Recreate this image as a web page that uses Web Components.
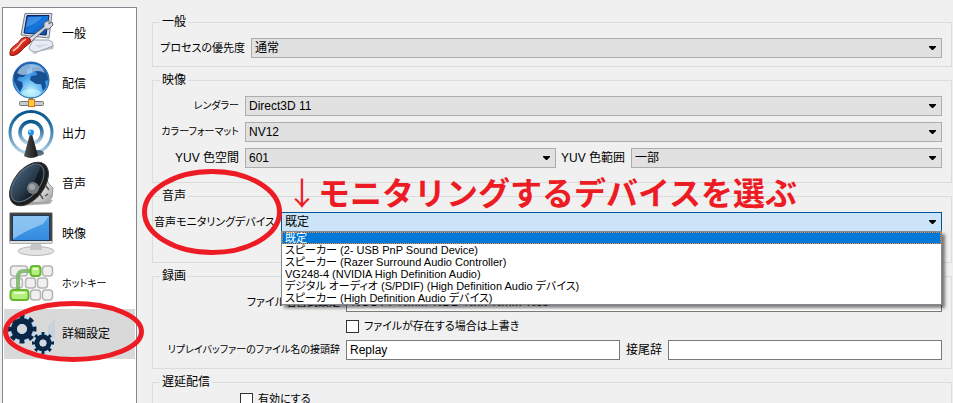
<!DOCTYPE html>
<html lang="ja">
<head>
<meta charset="utf-8">
<title>設定</title>
<style>
  body {
    margin: 0;
    height: 100vh;
    overflow: hidden;
    background: #f0f0f0;
    color: #000;
    font-family: "Liberation Sans", "Noto Sans CJK JP", sans-serif;
    font-size: 12px;
    line-height: 14px;
    font-feature-settings: "palt";
    --text-small: 11px;
    --text-dense: 10px;
  }
</style>
</head>
<body>
<settings-window>
  <side-nav slot="nav">
    <nav-item icon="general">一般</nav-item>
    <nav-item icon="stream">配信</nav-item>
    <nav-item icon="output">出力</nav-item>
    <nav-item icon="audio">音声</nav-item>
    <nav-item icon="video">映像</nav-item>
    <nav-item icon="hotkeys" dense>ホットキー</nav-item>
    <nav-item icon="advanced" selected>詳細設定</nav-item>
  </side-nav>

  <group-box heading="一般" style="--columns: 83px 1fr">
    <combo-field small label="プロセスの優先度" options="通常"></combo-field>
  </group-box>

  <group-box heading="映像" style="--columns: 77px 1fr 63px 1fr; --space-below: 14px">
    <combo-field wide dense label="レンダラー" options="Direct3D 11"></combo-field>
    <combo-field wide dense label="カラーフォーマット" options="NV12"></combo-field>
    <combo-field label="YUV 色空間" options="601"></combo-field>
    <combo-field label="YUV 色範囲" options="一部"></combo-field>
  </group-box>

  <group-box heading="音声" style="--columns: 113px 1fr; --space-below: 30px">
    <combo-field open small label="音声モニタリングデバイス" options="既定|スピーカー (2- USB PnP Sound Device)|スピーカー (Razer Surround Audio Controller)|VG248-4 (NVIDIA High Definition Audio)|デジタル オーディオ (S/PDIF) (High Definition Audio デバイス)|スピーカー (High Definition Audio デバイス)"></combo-field>
  </group-box>

  <group-box heading="録画" style="--columns: 178px 1fr 36px 1fr">
    <text-field wide small label="ファイル名書式設定" value="%CCYY-%MM-%DD %hh-%mm-%ss"></text-field>
    <check-field>ファイルが存在する場合は上書き</check-field>
    <text-field dense label="リプレイバッファーのファイル名の接頭辞" value="Replay"></text-field>
    <text-field label="接尾辞" value=""></text-field>
  </group-box>

  <group-box heading="遅延配信" style="--columns: 72px 1fr; --space-above: 2px">
    <check-field>有効にする</check-field>
  </group-box>

  <hand-notes slot="notes">モニタリングするデバイスを選ぶ</hand-notes>
</settings-window>

<script>
class SettingsWindow extends HTMLElement {
  constructor() {
    super();
    this.attachShadow({ mode: 'open' }).innerHTML = `
      <style>
        :host {
          position: relative;
          display: flex;
          gap: 15px;
          height: 100%;
          padding: 0 1px 0 2px;
          box-sizing: border-box;
        }
        main {
          flex: 1;
          min-width: 0;
          display: flex;
          flex-direction: column;
          gap: 6px;
          padding-top: 15px;
        }
      </style>
      <slot name="nav"></slot>
      <main><slot></slot></main>
      <slot name="notes"></slot>
    `;
  }
}

class SideNav extends HTMLElement {
  constructor() {
    super();
    this.attachShadow({ mode: 'open' }).innerHTML = `
      <style>
        :host {
          flex: 0 0 135px;
          box-sizing: border-box;
          margin-top: 7px;
          padding: 1px;
          background: #fff;
          border: 1px solid #828790;
          border-bottom: 0;
        }
        nav {
          display: flex;
          flex-direction: column;
        }
      </style>
      <nav><slot></slot></nav>
    `;
  }
}

const icons = {
  general: `
    <defs>
      <linearGradient id="scr" x1="0" y1="0" x2="1" y2="1"><stop offset="0" stop-color="#0646a8"/><stop offset=".5" stop-color="#1677de"/><stop offset="1" stop-color="#0b3f9c"/></linearGradient>
      <linearGradient id="red" x1="0" y1="0" x2="1" y2="1"><stop offset="0" stop-color="#ff8a78"/><stop offset=".5" stop-color="#d92a1c"/><stop offset="1" stop-color="#8f0d08"/></linearGradient>
    </defs>
    <path d="M24 43 L46 39 L47 36 L45 34 L28 44Z" fill="#999" opacity=".6"/>
    <path d="M26 30 L42 30 Q47 32 46 36 L30 42 Q23 42 22 38Z" fill="#e9ebf4" stroke="#9a9eb0"/>
    <path d="M27 35 L42 34 L32 38Z" fill="#d3d7e6"/>
    <path d="M18 3.500 L45 3.500 L42 28 L14 25Z" fill="#d9dce5" stroke="#777d8c"/>
    <path d="M20 5.500 L42 5.500 L39 25 L17 23Z" fill="url(#scr)" stroke="#09245a"/>
    <path d="M21 7 L35 7 Q30 14 19 17Z" fill="#5aaaf4" opacity=".6"/>
    <path d="M21 29 L37 17 L37 13 L42 10 L42 14 L45 12 L46 15 L42 19 L38 19 L24 32Z" fill="#d5d8e2" stroke="#5f6472"/>
    <path d="M3 42 Q3 38 11 33 Q14 27 19 27 Q25 28 23 33 Q16 38 13 42 Q7 47 3 45Z" fill="url(#red)" stroke="#8a1610"/>
    <path d="M6 41 Q11 38 15 32 L19 29" fill="none" stroke="#ffc4b8" stroke-width="1.500"/>`,
  stream: `
    <defs>
      <radialGradient id="globe" cx=".5" cy=".8" r=".8"><stop offset="0" stop-color="#bdf1ff"/><stop offset=".45" stop-color="#4fa8ee"/><stop offset="1" stop-color="#1462b8"/></radialGradient>
    </defs>
    <rect x="22" y="37" width="4" height="5" fill="#888"/>
    <rect x="12.500" y="41.500" width="24" height="4" rx="1" fill="#c9ccd0" stroke="#777"/>
    <rect x="21.500" y="39.500" width="6" height="7" fill="#ffc93c" stroke="#d8741c"/>
    <circle cx="24" cy="20" r="18" fill="url(#globe)" stroke="#2765a8"/>
    <path d="M7 15 Q10 8 17 5 L23 5 Q24 8 20 10 L20 14 L16 17 L12 17 L10 20 L15 22 L16 26 L13 32 L10 27 L7 21Z" fill="#164f92"/>
    <path d="M25 8 Q31 5 36 9 Q41 14 41 20 L38 21 L39 27 L36 31 L34 24 L29 24 L23 20 L24 16 L30 15 L29 12 L25 12Z" fill="#164f92"/>
    <path d="M10 13 Q14 4 24 4 Q35 4 38 13 Q31 9 24 13 Q16 17 10 13Z" fill="#d8efff" opacity=".6"/>
    <ellipse cx="24" cy="33" rx="10" ry="4" fill="#d8ffff" opacity=".5"/>`,
  output: `
    <defs>
      <linearGradient id="wave" x1="0" y1="0" x2="0" y2="1"><stop offset="0" stop-color="#0b568c"/><stop offset=".45" stop-color="#3a7fae"/><stop offset="1" stop-color="#b9d6ea"/></linearGradient>
      <linearGradient id="mast"><stop offset="0" stop-color="#555"/><stop offset=".5" stop-color="#333"/><stop offset="1" stop-color="#151515"/></linearGradient>
    </defs>
    <circle cx="24" cy="22.500" r="21" fill="none" stroke="url(#wave)" stroke-width="3"/>
    <circle cx="24" cy="22.500" r="11" fill="none" stroke="url(#wave)" stroke-width="3.500"/>
    <ellipse cx="31" cy="43" rx="6" ry="3" fill="#1c3b4c" opacity=".7"/>
    <path d="M23 24 L25 24 L31 46 Q24 50 17 46Z" fill="url(#mast)"/>
    <circle cx="24" cy="22.500" r="3" fill="#2492ee"/>
    <circle cx="23" cy="21.500" r="1" fill="#a8dcff"/>`,
  audio: `
    <defs>
      <linearGradient id="metal" x1="0" y1="0" x2="1" y2="1"><stop offset="0" stop-color="#666"/><stop offset=".5" stop-color="#eee"/><stop offset="1" stop-color="#999"/></linearGradient>
      <linearGradient id="cone" x1="0" y1="0" x2="1" y2="0"><stop offset="0" stop-color="#3d5870"/><stop offset=".6" stop-color="#263746"/><stop offset="1" stop-color="#0e151c"/></linearGradient>
    </defs>
    <path d="M10 45 L42 43 L45 40" stroke="#aaa" stroke-width="2" fill="none"/>
    <path d="M36 12 L42 24 L46 28 L45 37 L41 42 L18 43Z" fill="url(#metal)" stroke="#999"/>
    <path d="M39 26 L42 30 M33 34 L36 39 M41 34 L38 36" stroke="#555" stroke-width="1.500"/>
    <ellipse cx="22" cy="24" rx="15" ry="25" transform="rotate(38 22 24)" fill="#1d1d1d" stroke="#3a3a3a"/>
    <ellipse cx="20.500" cy="23" rx="12" ry="22" transform="rotate(38 20.500 23)" fill="url(#cone)" stroke="#627484"/>
    <path d="M24 29 L34 6 Q38 13 30 27Z" fill="#0b1015" opacity=".6"/>
    <circle cx="26" cy="28" r="6" fill="#777b80"/>
    <circle cx="25" cy="27" r="3" fill="#a2a5a8"/>`,
  video: `
    <defs>
      <linearGradient id="lcd" x1="0" y1="0" x2="0" y2="1"><stop offset="0" stop-color="#4da4ea"/><stop offset="1" stop-color="#3489df"/></linearGradient>
    </defs>
    <ellipse cx="29" cy="41" rx="18" ry="4.500" fill="#e3e3e3" stroke="#b7b7b7"/>
    <path d="M24 33 L34 33 L35 40 L23 40Z" fill="#c6c6c6"/>
    <rect x="2.500" y="2.500" width="43" height="31" rx="1" fill="#ddd" stroke="#b0b0b0"/>
    <path d="M3 3 H45 V31 H3Z" fill="#444"/>
    <rect x="5.500" y="5.500" width="37" height="25" fill="url(#lcd)" stroke="#1c3b5c"/>
    <path d="M6 6 H42 L36 14 Q20 20 6 29Z" fill="#a5d3f8" opacity=".7"/>`,
  hotkeys: `
    <g fill="#f0f0f0" stroke="#b4b4b4" stroke-width="1.500">
      <rect x="3.500" y="6" width="17" height="10" rx="3"/>
      <rect x="35.500" y="6" width="10" height="10" rx="3"/>
      <rect x="3.500" y="18" width="12" height="10" rx="3"/>
      <rect x="18.500" y="18" width="10" height="10" rx="3"/>
      <rect x="30.500" y="18" width="10" height="10" rx="3"/>
      <rect x="23.500" y="30" width="10" height="10" rx="3"/>
      <rect x="35.500" y="30" width="10" height="10" rx="3"/>
    </g>
    <path d="M24 11 H17 Q11 11 11 17 V31" fill="none" stroke="#79b565" stroke-width="4" opacity=".85"/>
    <g fill="#b7ee80" stroke="#65b82c" stroke-width="2">
      <rect x="23.500" y="6" width="10" height="10" rx="3"/>
      <rect x="3.500" y="30" width="18" height="10" rx="3"/>
    </g>
    <path d="M26 9 H31 M7 33 H18" stroke="#e5ffc9" stroke-width="2"/>`,
  advanced: `
    <path d="M41 16 L48 8 V28 H41Z" fill="#b8cbe0" opacity=".5"/>
    <g fill="none" stroke="#bcdcf5">
      <circle cx="15" cy="19" r="9" stroke-width="9"/>
      <circle cx="36" cy="33" r="7" stroke-width="7"/>
    </g>
    <g fill="none" stroke="#0b2745">
      <circle cx="15" cy="19" r="8" stroke-width="6"/>
      <circle cx="15" cy="19" r="12" stroke-width="5" pathLength="80" stroke-dasharray="5 5" stroke-dashoffset="2.500"/>
      <circle cx="36" cy="33" r="6" stroke-width="5"/>
      <circle cx="36" cy="33" r="9" stroke-width="4" pathLength="80" stroke-dasharray="4 6" stroke-dashoffset="2"/>
    </g>
    <g fill="#d9d9d9" stroke="#bcdcf5">
      <circle cx="15" cy="19" r="4.500"/>
      <circle cx="36" cy="33" r="3"/>
    </g>`
};

class NavItem extends HTMLElement {
  connectedCallback() {
    const selected = this.hasAttribute('selected');
    this.attachShadow({ mode: 'open' }).innerHTML = `
      <style>
        :host {
          display: block;
        }
        :host([dense]) {
          font-size: var(--text-dense);
        }
        button {
          display: flex;
          align-items: center;
          gap: 7px;
          width: 100%;
          height: 50px;
          padding: 0 3px;
          border: 0;
          background: transparent;
          color: inherit;
          font: inherit;
          font-feature-settings: inherit;
          white-space: nowrap;
        }
        button[aria-current] {
          background: #d9d9d9;
        }
        svg {
          flex: none;
          width: 48px;
          height: 48px;
        }
      </style>
      <button type="button" ${selected ? 'aria-current="page"' : ''}>
        <svg viewBox="0 0 48 48" aria-hidden="true">${icons[this.getAttribute('icon')]}</svg>
        <span><slot></slot></span>
      </button>
    `;
  }
}

class GroupBox extends HTMLElement {
  connectedCallback() {
    this.attachShadow({ mode: 'open' }).innerHTML = `
      <style>
        :host {
          display: block;
        }
        fieldset {
          min-width: 0;
          margin: 0;
          padding: var(--space-above, 9px) 9px var(--space-below, 8px);
          border: 1px solid #dcdcdc;
        }
        legend {
          margin-left: -2px;
          padding: 0 2px;
        }
        .rows {
          display: grid;
          grid-template-columns: var(--columns);
          gap: 6px;
          align-items: center;
        }
      </style>
      <fieldset>
        <legend>${this.getAttribute('heading')}</legend>
        <div class="rows"><slot></slot></div>
      </fieldset>
    `;
  }
}

// label and control both land in the grid of the group around them
const fieldStyles = `
  :host {
    display: contents;
  }
  .label {
    display: flex;
    justify-content: flex-end;
    white-space: nowrap;
  }
  :host([small]) .label {
    font-size: var(--text-small);
  }
  :host([dense]) .label {
    font-size: var(--text-dense);
  }
  .control {
    position: relative;
    min-width: 0;
    height: 20px;
  }
  :host([wide]) .control {
    grid-column: 2 / -1;
  }
  select, input {
    display: block;
    width: 100%;
    height: 20px;
    box-sizing: border-box;
    margin: 0;
    border-radius: 0;
    color: inherit;
    font: inherit;
    font-feature-settings: inherit;
  }
`;

class ComboField extends HTMLElement {
  connectedCallback() {
    const options = this.getAttribute('options').split('|');
    this.attachShadow({ mode: 'open' }).innerHTML = `
      <style>
        ${fieldStyles}
        select {
          appearance: none;
          padding: 0 20px 0 3px;
          background: #e1e1e1;
          border: 1px solid #adadad;
        }
        :host([open]) select {
          background: #cce4f7;
          border-color: #005499;
        }
        .arrow {
          position: absolute;
          top: 8px;
          right: 6px;
          width: 7px;
          height: 4px;
          pointer-events: none;
        }
        ul {
          position: absolute;
          z-index: 1;
          top: 19px;
          left: 0;
          right: 0;
          margin: 0;
          padding: 0;
          list-style: none;
          background: #fff;
          border: 1px solid #828790;
          box-shadow: 3px 3px 3px rgba(0, 0, 0, 0.5);
          font-size: var(--text-small);
        }
        li {
          height: 12px;
          padding-left: 3px;
          line-height: 12px;
          white-space: nowrap;
        }
        li[aria-selected="true"] {
          background: #0078d7;
          color: #fff;
          outline: 1px dotted #ff8728;
          outline-offset: -1px;
        }
      </style>
      <label class="label" for="box">${this.getAttribute('label')}</label>
      <div class="control">
        <select id="box">${options.map(o => `<option>${o}</option>`).join('')}</select>
        <svg class="arrow" viewBox="0 0 7 4" aria-hidden="true"><path d="M0 0H7V1L4 4H3L0 1Z"/></svg>
        ${this.hasAttribute('open') ? this.renderList(options) : ''}
      </div>
    `;
  }

  renderList(options) {
    const items = options.map((o, i) => `<li role="option" aria-selected="${i === 0}">${o}</li>`);
    return `<ul role="listbox">${items.join('')}</ul>`;
  }
}

class TextField extends HTMLElement {
  connectedCallback() {
    this.attachShadow({ mode: 'open' }).innerHTML = `
      <style>
        ${fieldStyles}
        input {
          padding: 0 3px;
          background: #fff;
          border: 1px solid #7a7a7a;
        }
      </style>
      <label class="label" for="box">${this.getAttribute('label')}</label>
      <div class="control">
        <input id="box" type="text" value="${this.getAttribute('value')}">
      </div>
    `;
  }
}

class CheckField extends HTMLElement {
  constructor() {
    super();
    this.attachShadow({ mode: 'open' }).innerHTML = `
      <style>
        :host {
          display: block;
          grid-column: 2 / -1;
          font-size: var(--text-small);
        }
        label {
          display: flex;
          align-items: center;
          gap: 5px;
          height: 16px;
        }
        input {
          appearance: none;
          width: 13px;
          height: 13px;
          box-sizing: border-box;
          margin: 0;
          background: #fff;
          border: 1px solid #333;
        }
      </style>
      <label><input type="checkbox"><span><slot></slot></span></label>
    `;
  }
}

// red marks laid over the window
class HandNotes extends HTMLElement {
  constructor() {
    super();
    this.attachShadow({ mode: 'open' }).innerHTML = `
      <style>
        :host {
          position: absolute;
          z-index: 2;
          inset: 0;
          color: #ed1c24;
          pointer-events: none;
        }
        svg {
          position: absolute;
          overflow: visible;
          fill: none;
          stroke: #ed1c24;
          stroke-width: 5;
        }
        .page {
          left: 3px;
          top: 301px;
          width: 141px;
          height: 61px;
        }
        .field {
          left: 142px;
          top: 169px;
          width: 140px;
          height: 86px;
        }
        p {
          position: absolute;
          left: 286px;
          top: 171px;
          margin: 0;
          font-family: "Noto Sans CJK JP", sans-serif;
          font-size: 32px;
          line-height: 40px;
          font-weight: 700;
          font-feature-settings: normal;
          white-space: nowrap;
        }
        span {
          font-weight: 400;
        }
      </style>
      <svg class="page" viewBox="0 0 141 61"><ellipse cx="70.500" cy="30.500" rx="68" ry="28"/></svg>
      <svg class="field" viewBox="0 0 140 86"><ellipse cx="70" cy="43" rx="67.500" ry="40.500"/></svg>
      <p><span>↓</span><slot></slot></p>
    `;
  }
}

customElements.define('settings-window', SettingsWindow);
customElements.define('side-nav', SideNav);
customElements.define('nav-item', NavItem);
customElements.define('group-box', GroupBox);
customElements.define('combo-field', ComboField);
customElements.define('text-field', TextField);
customElements.define('check-field', CheckField);
customElements.define('hand-notes', HandNotes);
</script>
</body>
</html>
